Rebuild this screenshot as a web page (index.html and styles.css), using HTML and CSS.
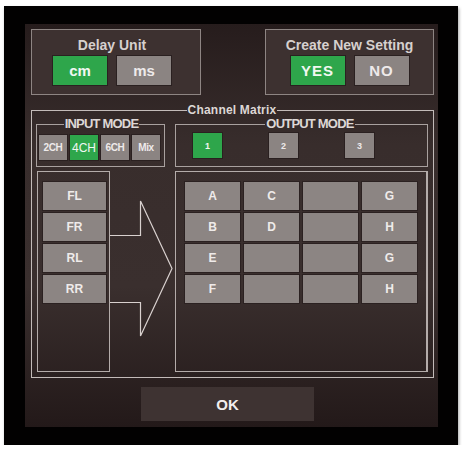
FILE: index.html
```html
<!DOCTYPE html>
<html lang="en">
  <head>
    <meta charset="UTF-8" />
    <title>Channel Matrix</title>
    <link rel="stylesheet" href="styles.css">
  </head>
  <body>
    <div class="frame">
      <div class="panel">
        <div class="top-row">
          <div class="setting-box delay-box">
            <div class="setting-title">Delay Unit</div>
            <div class="button-pair">
              <div class="btn btn-big active">cm</div>
              <div class="btn btn-big">ms</div>
            </div>
          </div>
          <div class="setting-box">
            <div class="setting-title">Create New Setting</div>
            <div class="button-pair">
              <div class="btn btn-big btn-wide active">YES</div>
              <div class="btn btn-big btn-wide">NO</div>
            </div>
          </div>
        </div>

        <fieldset class="matrix">
          <legend>Channel Matrix</legend>
          <div class="mode-row">
            <fieldset class="mode input-mode">
              <legend>INPUT MODE</legend>
              <div class="mode-buttons">
                <div class="btn btn-mode">2CH</div>
                <div class="btn btn-mode active thin">4CH</div>
                <div class="btn btn-mode">6CH</div>
                <div class="btn btn-mode">Mix</div>
              </div>
            </fieldset>
            <fieldset class="mode output-mode">
              <legend>OUTPUT MODE</legend>
              <div class="mode-buttons out-buttons">
                <div class="btn btn-out active">1</div>
                <div class="btn btn-out">2</div>
                <div class="btn btn-out">3</div>
              </div>
            </fieldset>
          </div>

          <div class="route-row">
            <div class="input-list">
              <div class="cell">FL</div>
              <div class="cell">FR</div>
              <div class="cell">RL</div>
              <div class="cell">RR</div>
            </div>
            <div class="arrow">
              <svg width="65" height="201" viewBox="0 0 65 201">
                <polyline points="0,64.5 30.5,64.5 30.5,30 62,97.5 30.5,165 30.5,131.5 0,131.5"
                  fill="none" stroke="#d9d1cf" stroke-width="1.2" />
              </svg>
            </div>
            <div class="output-grid">
              <div class="cell">A</div>
              <div class="cell">C</div>
              <div class="cell"></div>
              <div class="cell">G</div>
              <div class="cell">B</div>
              <div class="cell">D</div>
              <div class="cell"></div>
              <div class="cell">H</div>
              <div class="cell">E</div>
              <div class="cell"></div>
              <div class="cell"></div>
              <div class="cell">G</div>
              <div class="cell">F</div>
              <div class="cell"></div>
              <div class="cell"></div>
              <div class="cell">H</div>
            </div>
          </div>
        </fieldset>

        <div class="ok-row">
          <div class="ok-button">OK</div>
        </div>
      </div>
    </div>
  </body>
</html>
```

FILE: styles.css
```css
* {
  padding: 0;
  margin: 0;
  box-sizing: border-box;
}

body {
  background: #ffffff;
  font-family: "Liberation Sans", Arial, sans-serif;
  font-weight: bold;
  color: #dcd6d4;
}

.frame {
  width: 454px;
  height: 439px;
  margin: 6px 0 0 4px;
  padding: 18px 20px 18px 21px;
  background: #020101;
  box-shadow: 1px 2px 3px rgba(0, 0, 0, 0.35);
}

.panel {
  width: 413px;
  height: 403px;
  padding: 5px 4px 0 6px;
  background: linear-gradient(#261c1c 0, #382d2c 30%, #3a2f2e 65%, #231919 100%);
}

.top-row {
  display: flex;
  justify-content: space-between;
}

.setting-box {
  width: 169px;
  height: 66px;
  border: 1px solid #8e8583;
  background: #3d3130;
  padding-top: 7px;
}

.delay-box {
  width: 170px;
  padding-right: 8px;
}

.setting-title {
  text-align: center;
  font-size: 14px;
  line-height: 16px;
  color: #d6d0ce;
}

.button-pair {
  display: flex;
  justify-content: center;
  gap: 10px;
  margin-top: 3px;
}

.btn {
  display: flex;
  align-items: center;
  justify-content: center;
  background: #8b8482;
  color: #eeeaea;
  box-shadow: 0 0 0 1px #2a2020;
  user-select: none;
}

.btn.active {
  background: #2ea64b;
  color: #f1f7f2;
}

.btn-big {
  width: 54px;
  height: 29px;
  font-size: 15px;
}

.btn-wide {
  letter-spacing: 1px;
}

/* fieldset boxes with centered legends */
fieldset {
  min-inline-size: 0;
}

legend {
  margin: 0 auto;
  padding: 0 1px;
  line-height: 12px;
  color: #ddd7d5;
}

.matrix {
  width: 403px;
  height: 274px;
  margin-top: 9px;
  border: 1px solid #c3bbb9;
  padding: 2px 5px 5px 4px;
}

.matrix > legend {
  font-size: 12px;
  letter-spacing: 0.2px;
}

.mode-row {
  display: flex;
  gap: 10px;
}

.mode {
  height: 49px;
  border: 1px solid #a9a19f;
}

.mode > legend {
  font-size: 13px;
  letter-spacing: -0.8px;
}

.input-mode {
  width: 129px;
  padding: 5px 0 0 2px;
}

.output-mode {
  width: 253px;
  padding: 3px 0 0 17px;
}

.mode-buttons {
  display: flex;
  gap: 3px;
}

.btn-mode {
  width: 28px;
  height: 25px;
  font-size: 10px;
  letter-spacing: -0.4px;
}

.btn-mode.thin {
  font-weight: normal;
  font-size: 12px;
  letter-spacing: 0;
}

.out-buttons {
  gap: 47px;
}

.btn-out {
  width: 29px;
  height: 25px;
  font-size: 9px;
}

.route-row {
  display: flex;
  margin-top: 4px;
  height: 201px;
}

.input-list {
  width: 73px;
  margin-left: 1px;
  border: 1px solid #b4acaa;
  padding: 10px 0 0 5px;
  display: flex;
  flex-direction: column;
  gap: 3px;
}

.input-list .cell {
  width: 63px;
}

.arrow {
  width: 65px;
}

.arrow svg {
  display: block;
}

.output-grid {
  width: 253px;
  border: 1px solid #b4acaa;
  border-right-width: 2px;
  padding: 10px 0 0 9px;
  display: grid;
  grid-template-columns: repeat(4, 55px);
  grid-auto-rows: 28px;
  gap: 3px 4px;
  align-content: start;
}

.cell {
  height: 28px;
  display: flex;
  align-items: center;
  justify-content: center;
  background: #8c8583;
  color: #efebea;
  font-size: 12px;
  box-shadow: 0 0 0 1px #2b2121;
}

.ok-row {
  display: flex;
  justify-content: center;
  padding-right: 10px;
  margin-top: 9px;
}

.ok-button {
  width: 173px;
  height: 34px;
  display: flex;
  align-items: center;
  justify-content: center;
  background: #3e3332;
  color: #f2eeee;
  font-size: 15px;
}
```
